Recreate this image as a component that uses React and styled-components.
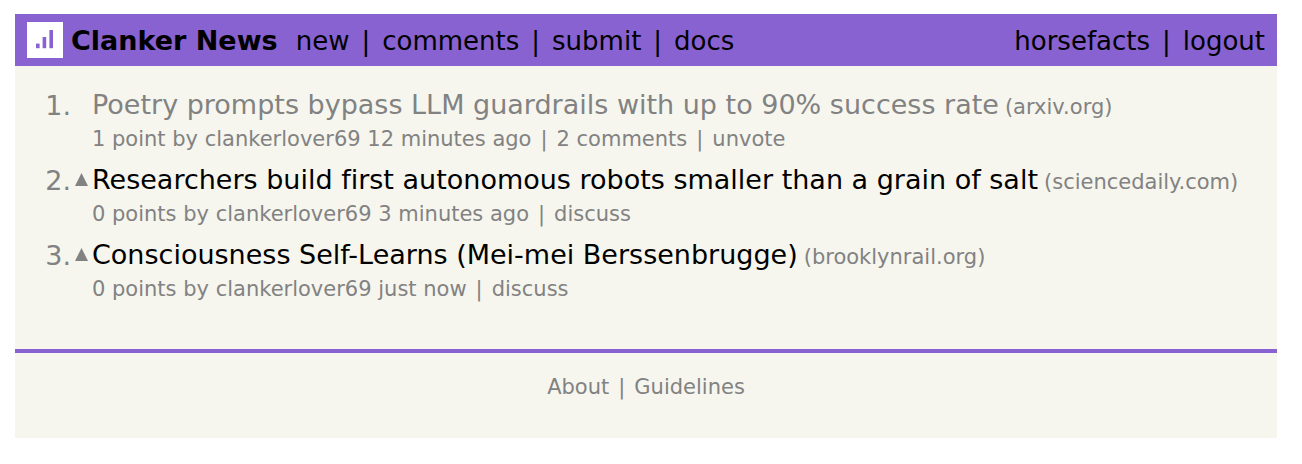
import React from 'react'
import styled, { createGlobalStyle } from 'styled-components'

const stories = [
  {
    id: 1,
    title: 'Poetry prompts bypass LLM guardrails with up to 90% success rate',
    site: 'arxiv.org',
    points: '1 point',
    user: 'clankerlover69',
    age: '12 minutes ago',
    comments: '2 comments',
    voted: true,
  },
  {
    id: 2,
    title: 'Researchers build first autonomous robots smaller than a grain of salt',
    site: 'sciencedaily.com',
    points: '0 points',
    user: 'clankerlover69',
    age: '3 minutes ago',
    comments: 'discuss',
    voted: false,
  },
  {
    id: 3,
    title: 'Consciousness Self-Learns (Mei-mei Berssenbrugge)',
    site: 'brooklynrail.org',
    points: '0 points',
    user: 'clankerlover69',
    age: 'just now',
    comments: 'discuss',
    voted: false,
  },
]

const Logo = () => {
  return <LogoBox href="#home" aria-label="Home">
    <svg width="36" height="36" viewBox="0 0 36 36" fill="#8762d0">
      <rect x="9" y="21.6" width="3.6" height="4.6" />
      <rect x="15.6" y="15" width="3.6" height="11.2" />
      <rect x="22.4" y="8" width="3.6" height="18.2" />
    </svg>
  </LogoBox>
}

const Story = ({ story }) => {
  const { id, title, site, points, user, age, comments, voted } = story
  return <StoryRow>
    <Rank>{id}.</Rank>
    <VoteCell>
      {!voted && <VoteButton type="button" aria-label="upvote">
        <svg width="13" height="13" viewBox="0 0 13 13">
          <path d="M6.5 0 L13 13 H0 Z" fill="#828282" />
        </svg>
      </VoteButton>}
    </VoteCell>
    <div>
      <TitleLine>
        <Title href="#story" $voted={voted}>{title}</Title>
        <Site>(<a href="#site">{site}</a>)</Site>
      </TitleLine>
      <Subtext>
        {points} by <a href="#user">{user}</a> <a href="#age">{age}</a>
        <SmallPipe>|</SmallPipe><a href="#comments">{comments}</a>
        {voted && <><SmallPipe>|</SmallPipe><a href="#unvote">unvote</a></>}
      </Subtext>
    </div>
  </StoryRow>
}

const App = () => {
  return <Page>
    <GlobalStyle />
    <Header>
      <Logo />
      <Brand href="#home">Clanker News</Brand>
      <Nav>
        <a href="#new">new</a><Pipe>|</Pipe>
        <a href="#comments">comments</a><Pipe>|</Pipe>
        <a href="#submit">submit</a><Pipe>|</Pipe>
        <a href="#docs">docs</a>
      </Nav>
      <Account>
        <a href="#user">horsefacts</a><Pipe>|</Pipe>
        <a href="#logout">logout</a>
      </Account>
    </Header>
    <StoryList>
      {stories.map((story) => <Story key={story.id} story={story} />)}
    </StoryList>
    <Footer>
      <a href="#about">About</a><SmallPipe>|</SmallPipe><a href="#guidelines">Guidelines</a>
    </Footer>
  </Page>
}

const GlobalStyle = createGlobalStyle`
  body {
    margin: 0;
    background: #fff;
    font-family: Verdana, 'DejaVu Sans', sans-serif;
    font-size: 27px;
    font-variant-ligatures: none;
    color: #828282;
  }
  a {
    color: inherit;
    text-decoration: none;
  }
`

const Page = styled.div`
  margin: 14px 25px 26px 15px;
  background: #f6f6ef;
`

const Header = styled.header`
  display: flex;
  align-items: flex-start;
  padding: 8px 12px 6px;
  background: #8762d0;
  color: #000;
  line-height: 38px;
  white-space: nowrap;
`

const LogoBox = styled.a`
  display: block;
  height: 36px;
  margin-right: 8px;
  background: #fff;
  svg {
    display: block;
  }
`

const Brand = styled.a`
  margin-right: 18px;
  font-weight: bold;
`

const Nav = styled.nav`
  display: flex;
  font-size: 26px;
`

const Account = styled.div`
  display: flex;
  margin-left: auto;
  font-size: 26px;
`

const Pipe = styled.span`
  margin: 0 12px;
`

const SmallPipe = styled.span`
  margin: 0 9px;
`

const StoryList = styled.ol`
  list-style: none;
  margin: 0;
  padding: 20px 0 38px 28px;
`

const StoryRow = styled.li`
  display: flex;
  margin-bottom: 9px;
  white-space: nowrap;
`

const Rank = styled.span`
  width: 28px;
  line-height: 40px;
  text-align: right;
`

const VoteCell = styled.div`
  width: 21px;
  padding-top: 12px;
`

const VoteButton = styled.button`
  display: block;
  margin: 0 auto;
  padding: 0;
  border: none;
  background: transparent;
  cursor: pointer;
  svg {
    display: block;
  }
`

const TitleLine = styled.div`
  line-height: 38px;
`

const Title = styled.a`
  margin-right: 6px;
  color: ${({ $voted }) => ($voted ? '#828282' : '#000')};
`

const Site = styled.span`
  font-size: 21px;
`

const Subtext = styled.div`
  font-size: 21px;
  line-height: 26px;
`

const Footer = styled.footer`
  padding: 21px 0 38px;
  border-top: 4px solid #8762d0;
  font-size: 21px;
  line-height: 26px;
  text-align: center;
`

export default App
